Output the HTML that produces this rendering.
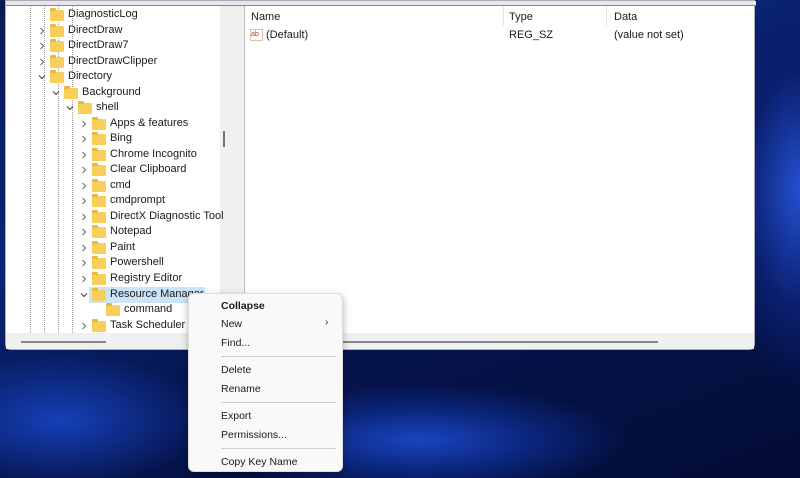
<!DOCTYPE html>
<html><head><style>
*{margin:0;padding:0;box-sizing:border-box}
body{width:800px;height:478px;overflow:hidden;position:relative;font-family:"Liberation Sans",sans-serif;font-size:11px;color:#1a1a1a;
background:radial-gradient(ellipse 260px 70px at 420px 440px,#1a45c0 0%,#0a2478 45%,transparent 80%),
radial-gradient(ellipse 120px 260px at 800px 190px,#2450d0 0%,#0a1f6e 45%,transparent 75%),
radial-gradient(ellipse 200px 90px at 60px 420px,#1540b8 0%,transparent 75%),
linear-gradient(160deg,#0a1a55 0%,#0a2575 35%,#061550 60%,#030c35 100%);}
.win{position:absolute;left:5px;top:0;width:750px;height:350px;background:#f3f3f3;border-radius:0 0 6px 6px;border:1px solid #aab;}
.top{position:absolute;left:0;top:0;width:750px;height:5px;background:#e8e8e8;border-bottom:1px solid #888}
.tree{position:absolute;left:0;top:5px;width:214px;height:327px;background:#fff;overflow:hidden}
.vs{position:absolute;left:214px;top:5px;width:22px;height:327px;background:#f0f0f0}
.right{position:absolute;left:238px;top:5px;width:510px;height:327px;background:#fff;border-left:1px solid #bbb}
.row{position:absolute;height:15px;line-height:15px;white-space:nowrap}
.f{position:absolute;width:14px;height:11px;background:#f7cf5a;border-radius:1px;top:3px}
.f:before{content:"";position:absolute;left:0;top:-2px;width:6px;height:3px;background:#e9b83c;border-radius:1px 1px 0 0}
.ar{position:absolute;left:0;top:4px;width:8px;height:8px}
.dl{position:absolute;top:0;height:327px;border-left:1px dotted #999;width:0}
.menu{position:absolute;left:188px;top:293px;width:155px;height:179px;background:#f9f9f9;border-radius:6px;border:1px solid #ddd;box-shadow:0 3px 8px rgba(0,0,0,.3)}
.mi{position:absolute;left:32px;font-size:10.5px}
.sep{position:absolute;left:32px;width:115px;border-top:1px solid #ccc}
</style></head><body>
<div class="win">
<div class="top"></div>
<div class="tree">
<div class="dl" style="left:24px"></div><div class="dl" style="left:38px"></div><div class="dl" style="left:52px"></div><div class="dl" style="left:66px"></div>
<div style="position:absolute;left:83px;top:281px;width:116px;height:16px;background:#cce4f7"></div>
</div>
<div class="vs"><div style="position:absolute;left:3px;top:125px;width:2px;height:16px;background:#777"></div></div>
<div class="right">
<div class="row" style="left:6px;top:4px">Name</div>
<div style="position:absolute;left:258px;top:0;height:20px;border-left:1px solid #e5e5e5"></div>
<div class="row" style="left:264px;top:4px">Type</div>
<div style="position:absolute;left:361px;top:0;height:20px;border-left:1px solid #e5e5e5"></div>
<div class="row" style="left:369px;top:4px">Data</div>
<div style="position:absolute;left:5px;top:23px;width:13px;height:12px;border:1px solid #cca;background:#fff;font-size:7px;color:#c33;line-height:9px">ab</div>
<div class="row" style="left:21px;top:22px">(Default)</div>
<div class="row" style="left:264px;top:22px">REG_SZ</div>
<div class="row" style="left:369px;top:22px">(value not set)</div>
</div>
<div style="position:absolute;left:0;top:332px;width:748px;height:16px;background:#f0f0f0"></div>
<div style="position:absolute;left:15px;top:340px;width:85px;height:2px;background:#888"></div>
<div style="position:absolute;left:240px;top:340px;width:412px;height:2px;background:#888"></div>
</div>
<svg width="0" height="0" style="position:absolute"><defs>
<symbol id="r" viewBox="0 0 8 8"><path d="M2.5 1 L5.5 4 L2.5 7" fill="none" stroke="#666" stroke-width="1"/></symbol>
<symbol id="d" viewBox="0 0 8 8"><path d="M1 2.5 L4 5.5 L7 2.5" fill="none" stroke="#444" stroke-width="1.1"/></symbol>
</defs></svg>
<div style="position:absolute;left:0;top:1px">
<div class="row" style="top:6px;left:50px"><span class="f" style="left:0"></span><span style="margin-left:18px">DiagnosticLog</span></div>
<div class="row" style="top:22px;left:38px"><svg class="ar"><use href="#r"/></svg><span class="f" style="left:12px"></span><span style="margin-left:30px">DirectDraw</span></div>
<div class="row" style="top:37px;left:38px"><svg class="ar"><use href="#r"/></svg><span class="f" style="left:12px"></span><span style="margin-left:30px">DirectDraw7</span></div>
<div class="row" style="top:53px;left:38px"><svg class="ar"><use href="#r"/></svg><span class="f" style="left:12px"></span><span style="margin-left:30px">DirectDrawClipper</span></div>
<div class="row" style="top:68px;left:38px"><svg class="ar"><use href="#d"/></svg><span class="f" style="left:12px"></span><span style="margin-left:30px">Directory</span></div>
<div class="row" style="top:84px;left:52px"><svg class="ar"><use href="#d"/></svg><span class="f" style="left:12px"></span><span style="margin-left:30px">Background</span></div>
<div class="row" style="top:99px;left:66px"><svg class="ar"><use href="#d"/></svg><span class="f" style="left:12px"></span><span style="margin-left:30px">shell</span></div>
<div class="row" style="top:115px;left:80px"><svg class="ar"><use href="#r"/></svg><span class="f" style="left:12px"></span><span style="margin-left:30px">Apps &amp; features</span></div>
<div class="row" style="top:130px;left:80px"><svg class="ar"><use href="#r"/></svg><span class="f" style="left:12px"></span><span style="margin-left:30px">Bing</span></div>
<div class="row" style="top:146px;left:80px"><svg class="ar"><use href="#r"/></svg><span class="f" style="left:12px"></span><span style="margin-left:30px">Chrome Incognito</span></div>
<div class="row" style="top:161px;left:80px"><svg class="ar"><use href="#r"/></svg><span class="f" style="left:12px"></span><span style="margin-left:30px">Clear Clipboard</span></div>
<div class="row" style="top:177px;left:80px"><svg class="ar"><use href="#r"/></svg><span class="f" style="left:12px"></span><span style="margin-left:30px">cmd</span></div>
<div class="row" style="top:192px;left:80px"><svg class="ar"><use href="#r"/></svg><span class="f" style="left:12px"></span><span style="margin-left:30px">cmdprompt</span></div>
<div class="row" style="top:208px;left:80px"><svg class="ar"><use href="#r"/></svg><span class="f" style="left:12px"></span><span style="margin-left:30px">DirectX Diagnostic Tool</span></div>
<div class="row" style="top:223px;left:80px"><svg class="ar"><use href="#r"/></svg><span class="f" style="left:12px"></span><span style="margin-left:30px">Notepad</span></div>
<div class="row" style="top:239px;left:80px"><svg class="ar"><use href="#r"/></svg><span class="f" style="left:12px"></span><span style="margin-left:30px">Paint</span></div>
<div class="row" style="top:254px;left:80px"><svg class="ar"><use href="#r"/></svg><span class="f" style="left:12px"></span><span style="margin-left:30px">Powershell</span></div>
<div class="row" style="top:270px;left:80px"><svg class="ar"><use href="#r"/></svg><span class="f" style="left:12px"></span><span style="margin-left:30px">Registry Editor</span></div>
<div class="row" style="top:286px;left:80px"><svg class="ar"><use href="#d"/></svg><span class="f" style="left:12px"></span><span style="margin-left:30px">Resource Manager</span></div>
<div class="row" style="top:301px;left:106px"><span class="f" style="left:0"></span><span style="margin-left:18px">command</span></div>
<div class="row" style="top:317px;left:80px"><svg class="ar"><use href="#r"/></svg><span class="f" style="left:12px"></span><span style="margin-left:30px">Task Scheduler</span></div>
</div>
<div class="menu">
<div class="mi" style="top:6px;font-weight:bold">Collapse</div>
<div class="mi" style="top:24px">New</div><div style="position:absolute;left:136px;top:23px;font-size:10px">›</div>
<div class="mi" style="top:43px">Find...</div>
<div class="sep" style="top:62px"></div>
<div class="mi" style="top:70px">Delete</div>
<div class="mi" style="top:89px">Rename</div>
<div class="sep" style="top:108px"></div>
<div class="mi" style="top:116px">Export</div>
<div class="mi" style="top:135px">Permissions...</div>
<div class="sep" style="top:154px"></div>
<div class="mi" style="top:162px">Copy Key Name</div>
</div>
</body></html>
